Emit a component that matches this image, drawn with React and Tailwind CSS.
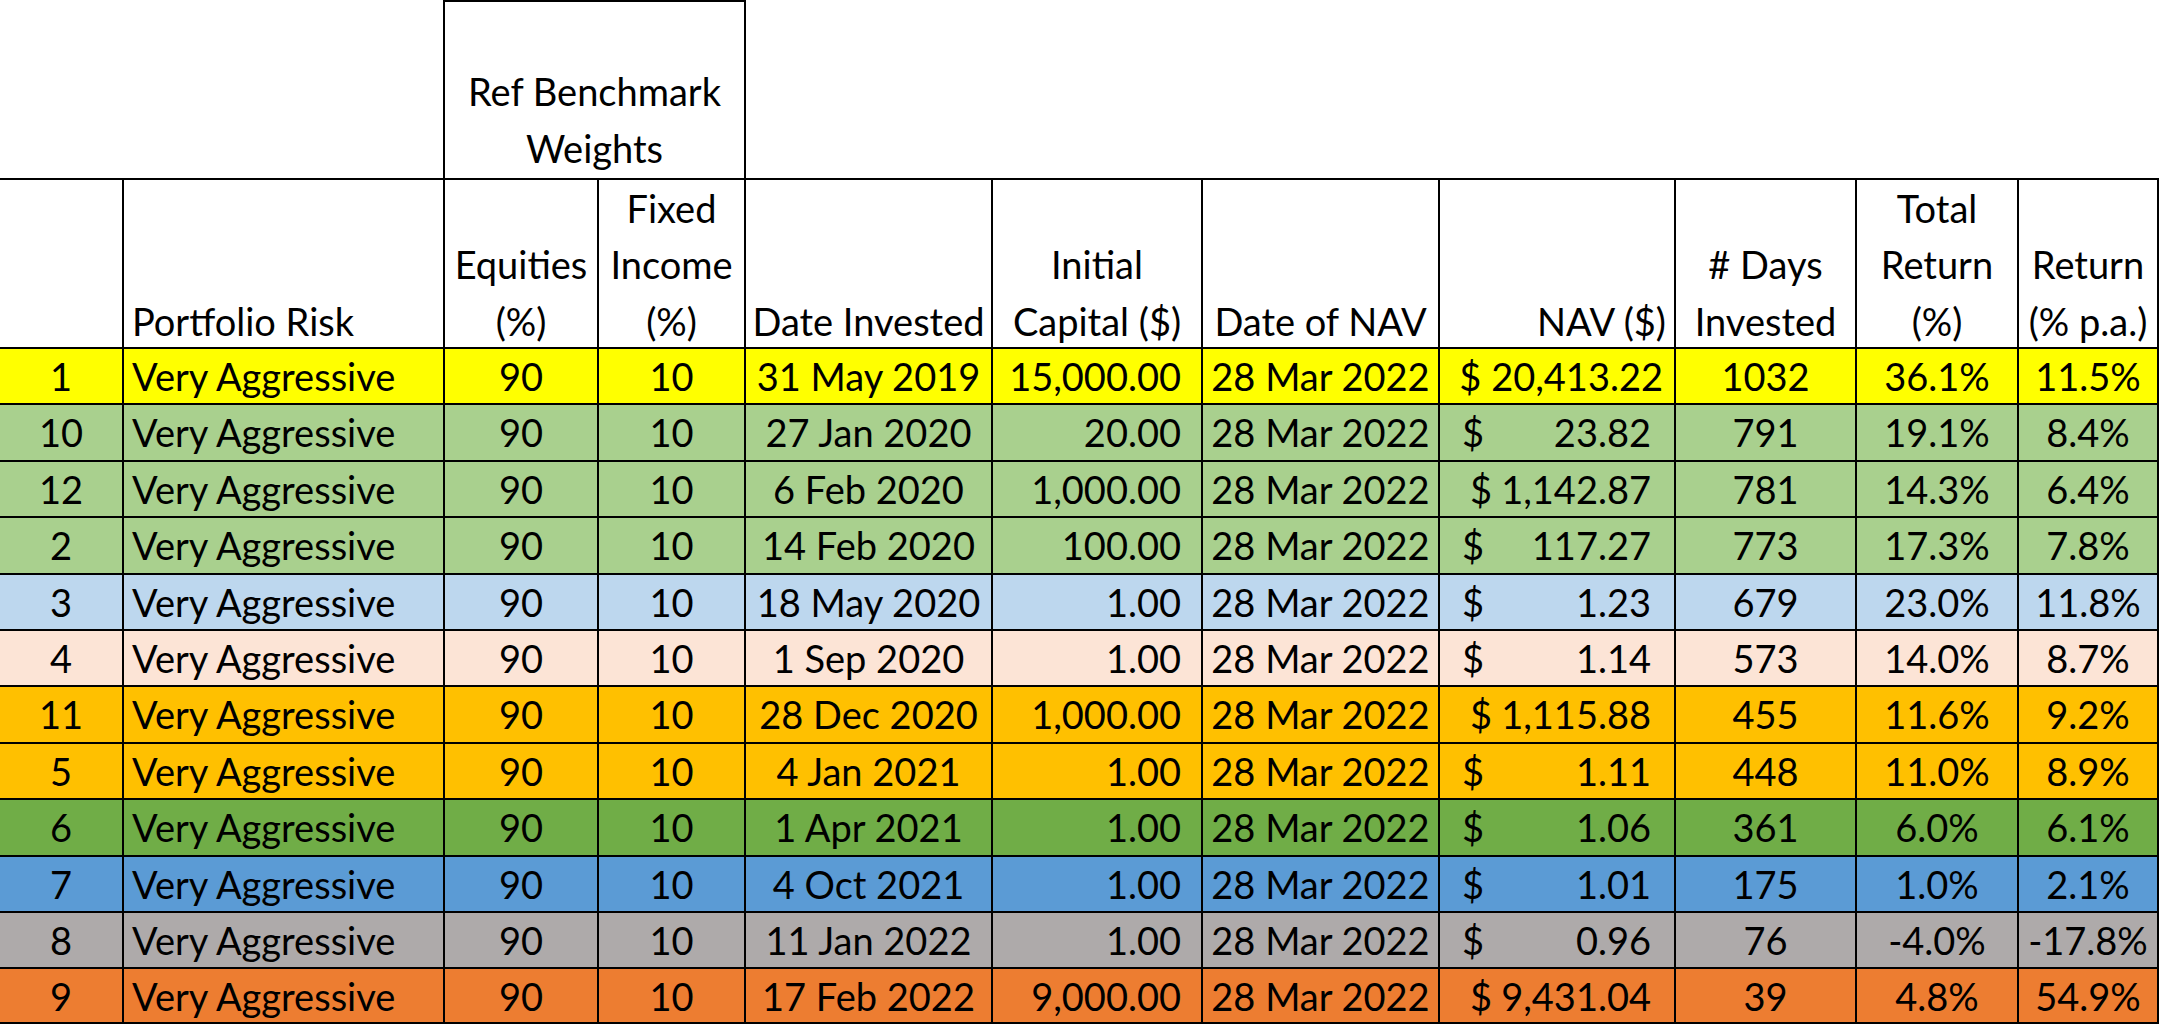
import React from 'react';

const cols = 'grid grid-cols-[122px_321px_154px_147px_247px_210px_237px_236px_181px_162px_142px]';

const rows = [
  ['1', '31 May 2019', '15,000.00', '20,413.22', '1032', '36.1%', '11.5%', 'bg-[#ffff00]'],
  ['10', '27 Jan 2020', '20.00', '23.82', '791', '19.1%', '8.4%', 'bg-[#a9d08e]'],
  ['12', '6 Feb 2020', '1,000.00', '1,142.87', '781', '14.3%', '6.4%', 'bg-[#a9d08e]'],
  ['2', '14 Feb 2020', '100.00', '117.27', '773', '17.3%', '7.8%', 'bg-[#a9d08e]'],
  ['3', '18 May 2020', '1.00', '1.23', '679', '23.0%', '11.8%', 'bg-[#bdd7ee]'],
  ['4', '1 Sep 2020', '1.00', '1.14', '573', '14.0%', '8.7%', 'bg-[#fce4d6]'],
  ['11', '28 Dec 2020', '1,000.00', '1,115.88', '455', '11.6%', '9.2%', 'bg-[#ffc000]'],
  ['5', '4 Jan 2021', '1.00', '1.11', '448', '11.0%', '8.9%', 'bg-[#ffc000]'],
  ['6', '1 Apr 2021', '1.00', '1.06', '361', '6.0%', '6.1%', 'bg-[#70ad47]'],
  ['7', '4 Oct 2021', '1.00', '1.01', '175', '1.0%', '2.1%', 'bg-[#5b9bd5]'],
  ['8', '11 Jan 2022', '1.00', '0.96', '76', '-4.0%', '-17.8%', 'bg-[#aeaaaa]'],
  ['9', '17 Feb 2022', '9,000.00', '9,431.04', '39', '4.8%', '54.9%', 'bg-[#ed7d31]'],
];

// header cell: lines stacked at the bottom
const Head = ({ lines, align = 'text-center', extra = '', first }) => (
  <div className={`flex flex-col justify-end h-full ${first ? '' : 'border-l-2'} border-black ${align} ${extra}`}>
    {lines.map((l, i) => (
      <div key={i} className="leading-[56.4px] whitespace-nowrap">{l}</div>
    ))}
  </div>
);

const Cell = ({ children, className = '' }) => (
  <div className={`border-l-2 border-black leading-[54.4px] whitespace-nowrap ${className}`}>{children}</div>
);

export default function App() {
  return (
    <div className="w-[2159px] h-[1027px] bg-white text-black overflow-hidden text-[38px]" style={{ fontFamily: 'Lato, "Open Sans", sans-serif' }}>
      {/* top box over the benchmark columns */}
      <div className="flex h-[178px]">
        <div className="w-[443px]" />
        <div className="w-[303px] border-t-2 border-l-2 border-r-2 border-black flex flex-col justify-end text-center">
          <div className="leading-[56.4px]">Ref Benchmark</div>
          <div className="leading-[56.4px] pb-[2px]">Weights</div>
        </div>
      </div>

      {/* column headers */}
      <div className={`${cols} h-[169px] border-t-2 border-black`}>
        <Head lines={['']} first />
        <Head lines={['Portfolio Risk']} align="text-left" extra="pl-[8px]" />
        <Head lines={['Equities', '(%)']} />
        <Head lines={['Fixed', 'Income', '(%)']} />
        <Head lines={['Date Invested']} />
        <Head lines={['Initial', 'Capital ($)']} />
        <Head lines={['Date of NAV']} />
        <Head lines={['NAV ($)']} align="text-right" extra="pr-[8px]" />
        <Head lines={['# Days', 'Invested']} />
        <Head lines={['Total', 'Return', '(%)']} />
        <Head lines={['Return', '(% p.a.)']} extra="border-r-2" />
      </div>

      {/* data rows */}
      {rows.map(([id, inv, cap, nav, days, tr, pa, bg], i) => {
        const wide = nav.length > 6;
        return (
          <div key={i} className={`${cols} h-[56.42px] border-t-2 border-black ${bg} ${i === rows.length - 1 ? 'border-b-2' : ''}`}>
            <div className="leading-[54.4px] text-center">{id}</div>
            <Cell className="pl-[8px]">Very Aggressive</Cell>
            <Cell className="text-center">90</Cell>
            <Cell className="text-center">10</Cell>
            <Cell className="text-center">{inv}</Cell>
            <Cell className="text-right pr-[20px]">{cap}</Cell>
            <Cell className="text-center">28 Mar 2022</Cell>
            {i === 0 ? (
              <Cell className="text-right pr-[11px]">$ {nav}</Cell>
            ) : (
              <Cell className={`flex justify-between pr-[23px] ${wide ? 'pl-[30px]' : 'pl-[22px]'}`}>
                <span>$</span>
                <span>{nav}</span>
              </Cell>
            )}
            <Cell className="text-center">{days}</Cell>
            <Cell className="text-center">{tr}</Cell>
            <Cell className="text-center border-r-2">{pa}</Cell>
          </div>
        );
      })}
    </div>
  );
}
